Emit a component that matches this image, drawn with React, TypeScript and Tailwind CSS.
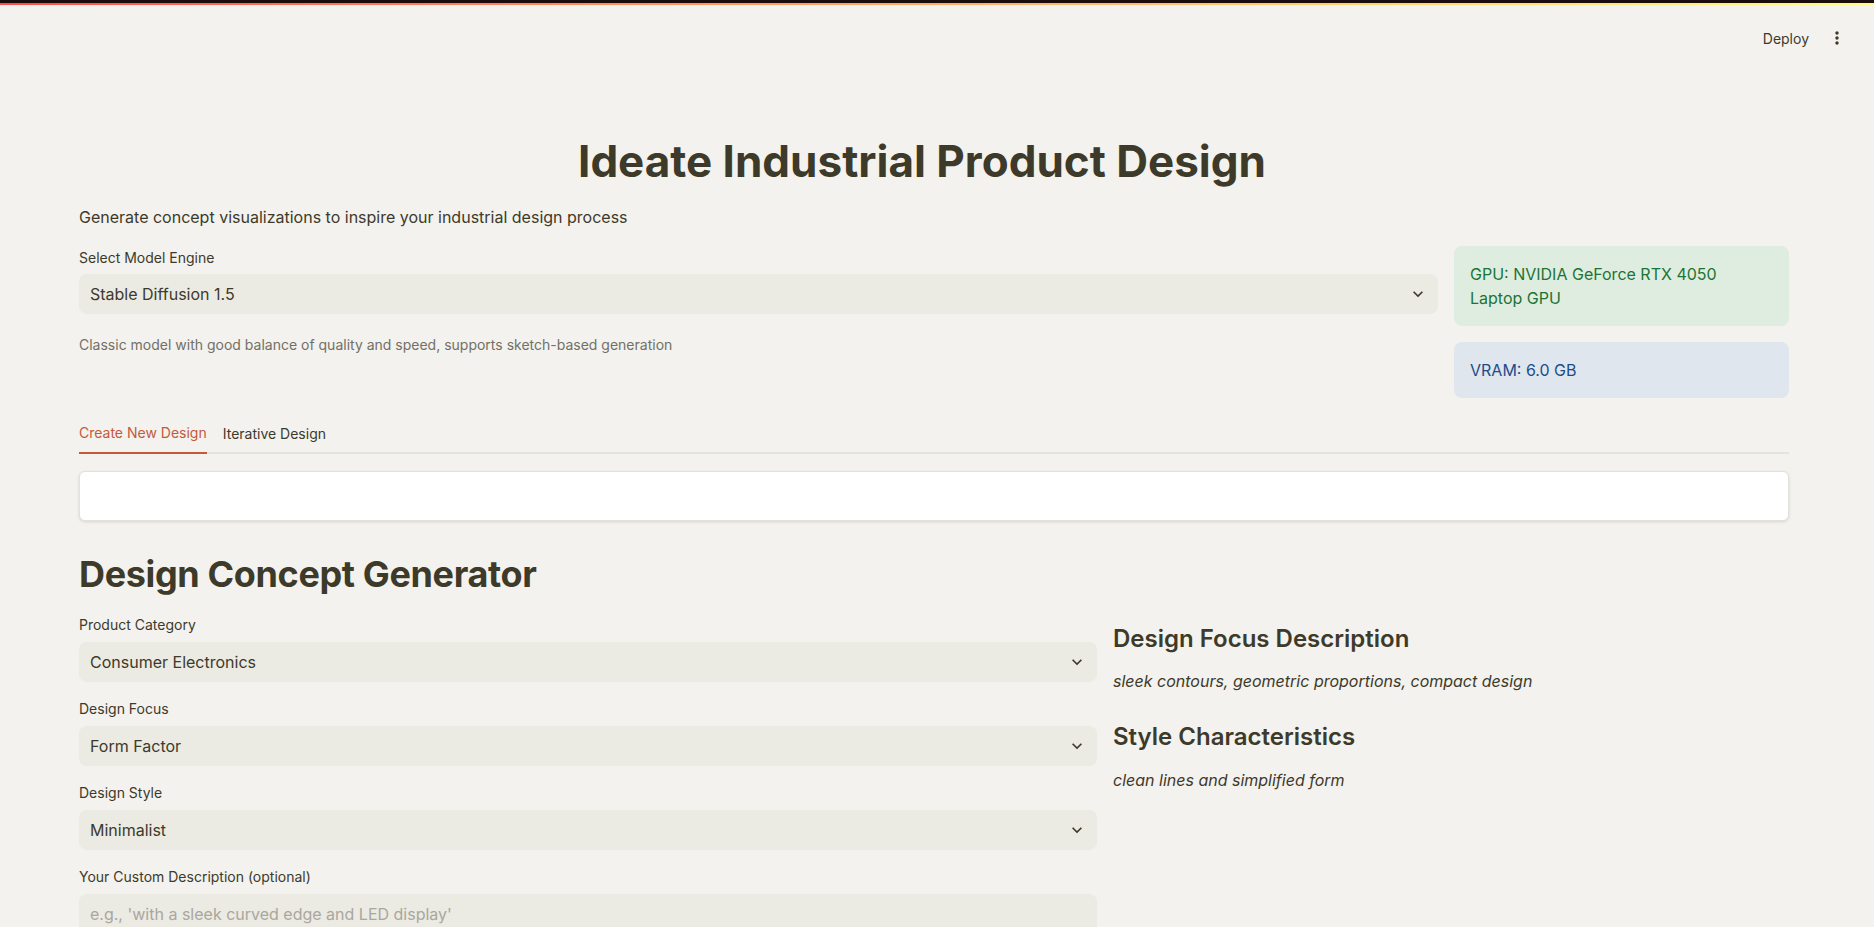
import React from 'react';

function Chevron() {
  return (
    <svg viewBox="0 0 24 24" className="w-5 h-5 fill-[#3d3a2a]">
      <path d="M16.59 8.59 12 13.17 7.41 8.59 6 10l6 6 6-6z" />
    </svg>
  );
}

function Field({ label, value, placeholder }: { label: string; value?: string; placeholder?: string }) {
  return (
    <div>
      <div className="h-[24px] flex items-center text-[14px] text-[#3d3a2a] mb-[5px]">{label}</div>
      <div className="h-[40px] rounded-lg bg-[#ebeae3] flex items-center justify-between pl-[11px] pr-[10px]">
        {value ? (
          <span className="text-[16px] text-[#3d3a2a]">{value}</span>
        ) : (
          <span className="text-[16px] text-[#a9a79e]">{placeholder}</span>
        )}
        {value && <Chevron />}
      </div>
    </div>
  );
}

export default function App() {
  return (
    <div className="min-h-[927px] bg-[#f3f2ee] font-['Inter','Noto_Sans',sans-serif] text-[#3d3a2a] overflow-hidden">
      {/* Top decoration */}
      <div className="h-[3px] bg-[#1a0c0c]" />
      <div className="h-[2px] bg-gradient-to-r from-[#ff4b4b] to-[#fffd80]" />

      {/* Header */}
      <div className="h-[66px] flex items-center justify-end pr-[27px] gap-[18px]">
        <span className="text-[14px] text-[#3d3a2a]">Deploy</span>
        <svg viewBox="0 0 24 24" className="w-[20px] h-[20px] fill-[#3d3a2a]">
          <path d="M12 8c1.1 0 2-.9 2-2s-.9-2-2-2-2 .9-2 2 .9 2 2 2zm0 2c-1.1 0-2 .9-2 2s.9 2 2 2 2-.9 2-2-.9-2-2-2zm0 6c-1.1 0-2 .9-2 2s.9 2 2 2 2-.9 2-2-.9-2-2-2z" />
        </svg>
      </div>

      <main className="pl-[79px] pr-[85px]">
        <h1 className="mt-[64px] pr-[24px] text-center text-[44px] leading-[1.2] font-bold">
          Ideate Industrial Product Design
        </h1>
        <p className="mt-[17px] text-[16px] leading-[24px]">
          Generate concept visualizations to inspire your industrial design process
        </p>

        {/* Model engine row */}
        <div className="mt-[17px] grid grid-cols-[1fr_335px] gap-4 items-start">
          <div>
            <div className="h-[24px] flex items-center text-[14px] mb-[4px]">Select Model Engine</div>
            <div className="h-[40px] rounded-lg bg-[#ebeae3] flex items-center justify-between pl-[11px] pr-[10px]">
              <span className="text-[16px]">Stable Diffusion 1.5</span>
              <Chevron />
            </div>
            <p className="mt-[21px] text-[14px] leading-[20px] text-[#727066]">
              Classic model with good balance of quality and speed, supports sketch-based generation
            </p>
          </div>
          <div className="flex flex-col gap-4">
            <div className="rounded-lg bg-[#dfede0] pl-4 pr-[36px] py-4 text-[16px] leading-[24px] text-[#1b7434]">
              GPU: NVIDIA GeForce RTX 4050 Laptop GPU
            </div>
            <div className="rounded-lg bg-[#dfe6ed] px-4 py-4 text-[16px] leading-[24px] text-[#1d4d8a]">
              VRAM: 6.0 GB
            </div>
          </div>
        </div>

        {/* Tabs */}
        <div className="mt-[16px] flex gap-4 border-b-2 border-[#e4e3dd]">
          <button className="h-[40px] -mb-[2px] border-b-2 border-[#c45a3a] text-[14px] text-[#c45a3a] flex items-center">
            Create New Design
          </button>
          <button className="h-[40px] -mb-[2px] text-[14px] text-[#3d3a2a] flex items-center">
            Iterative Design
          </button>
        </div>

        <div className="mt-[17px] h-[50px] rounded-md bg-white border border-[#e2e1dc] shadow-[0_1px_3px_rgba(0,0,0,0.12)]" />

        <h2 className="mt-[32px] text-[36px] leading-[1.2] font-bold tracking-[-0.01em]">Design Concept Generator</h2>

        <div className="mt-[17px] grid grid-cols-[1018px_1fr] gap-4 items-start">
          <div className="flex flex-col gap-[15px]">
            <Field label="Product Category" value="Consumer Electronics" />
            <Field label="Design Focus" value="Form Factor" />
            <Field label="Design Style" value="Minimalist" />
            <Field label="Your Custom Description (optional)" placeholder="e.g., 'with a sleek curved edge and LED display'" />
          </div>
          <div>
            <h3 className="mt-[11px] text-[24px] leading-[29px] font-semibold">Design Focus Description</h3>
            <p className="mt-[16px] text-[16px] leading-[24px] italic">sleek contours, geometric proportions, compact design</p>
            <h3 className="mt-[29px] text-[24px] leading-[29px] font-semibold">Style Characteristics</h3>
            <p className="mt-[17px] text-[16px] leading-[24px] italic">clean lines and simplified form</p>
          </div>
        </div>
      </main>
    </div>
  );
}
